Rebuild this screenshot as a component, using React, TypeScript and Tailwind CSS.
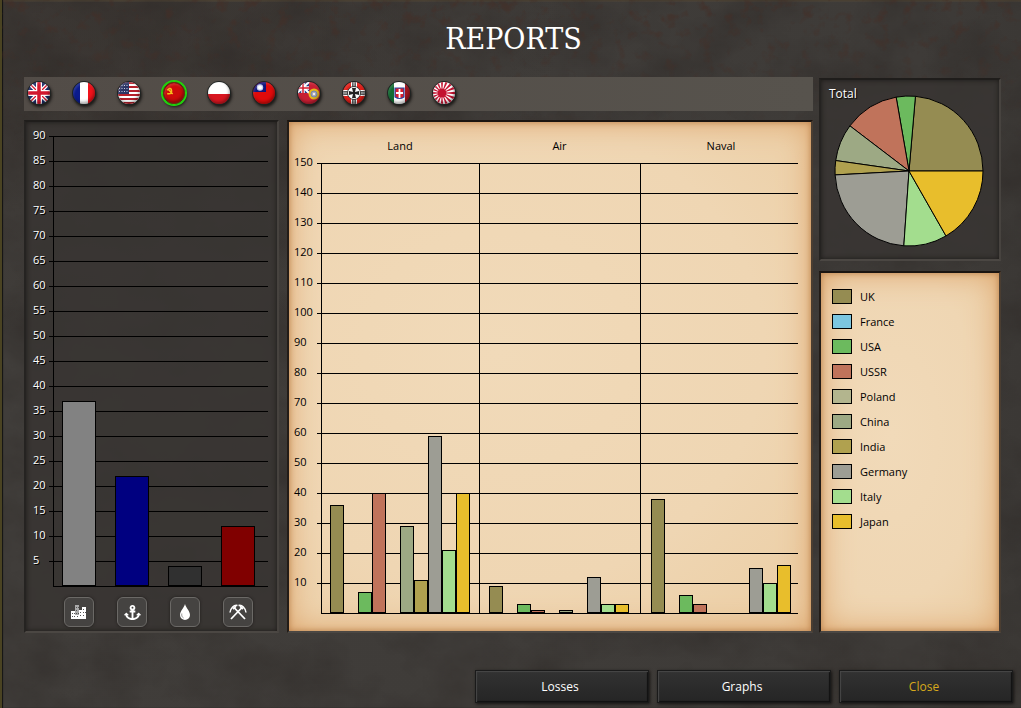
import type { ReactNode } from "react";
import { FaAnchor } from "react-icons/fa";

type Country = {
  name: string;
  color: string;
  land: number;
  air: number;
  naval: number;
  share: number; // degrees of the total pie
};

const COUNTRIES: Country[] = [
  { name: "UK", color: "#958c52", land: 36, air: 9, naval: 38, share: 85 },
  { name: "France", color: "#7cc6e0", land: 0, air: 0, naval: 0, share: 0 },
  { name: "USA", color: "#6cba5e", land: 7, air: 3, naval: 6, share: 15 },
  { name: "USSR", color: "#c0735b", land: 40, air: 1, naval: 3, share: 43 },
  { name: "Poland", color: "#b3b58e", land: 0, air: 0, naval: 0, share: 0 },
  { name: "China", color: "#9da984", land: 29, air: 1, naval: 0, share: 29 },
  { name: "India", color: "#b0a14f", land: 11, air: 0, naval: 0, share: 11 },
  { name: "Germany", color: "#9d9d94", land: 59, air: 12, naval: 15, share: 83 },
  { name: "Italy", color: "#a3dd8e", land: 21, air: 3, naval: 10, share: 34 },
  { name: "Japan", color: "#e8be2c", land: 40, air: 3, naval: 16, share: 60 },
];

const RESOURCES = [
  { name: "Industry", value: 37, color: "#828282", icon: <CityIcon /> },
  { name: "Ports", value: 22, color: "#000080", icon: <FaAnchor size={17} /> },
  { name: "Oil", value: 4, color: "#303030", icon: <OilIcon /> },
  { name: "Minerals", value: 12, color: "#800000", icon: <MiningIcon /> },
];

const RESOURCE_TICKS = Array.from({ length: 18 }, (_, i) => 90 - i * 5);
const FORCE_TICKS = Array.from({ length: 15 }, (_, i) => 150 - i * 10);

export default function App() {
  return (
    <div className="relative isolate flex min-h-screen flex-col border-l-2 border-[#4a4322] bg-[#3b3835] font-['Open_Sans','Noto_Sans',sans-serif] text-[11px] text-white">
      <Backdrop />

      <header className="flex h-[77px] items-center justify-center pl-1">
        <h1 className="font-['DejaVu_Serif_Condensed','Liberation_Serif',serif] text-[30px] leading-9">REPORTS</h1>
      </header>

      <main className="flex gap-[6px] pr-5 pl-[22px]">
        <div className="flex min-w-0 flex-1 flex-col gap-[9px]">
          <FlagBar />
          <div className="grid flex-1 grid-cols-[255fr_526fr] gap-2">
            <ResourceChart />
            <ForceChart />
          </div>
        </div>

        <aside className="flex w-[182px] shrink-0 flex-col gap-[10px] pt-px">
          <section className={"relative flex h-[183px] items-center justify-center pt-0.5 pr-0.5 " + DARK_PANEL}>
            <h2 className="absolute top-1 left-2 text-[12px] leading-5 [text-shadow:1px_1px_1px_#000]">Total</h2>
            <TotalPie />
          </section>
          <section className={"flex-1 pt-[11px] pl-[11px] " + PAPER_PANEL}>
            <ul>
              {COUNTRIES.map((c) => (
                <li key={c.name} className="flex h-[25px] items-center gap-2">
                  <span className="h-[15px] w-5 border border-black" style={{ backgroundColor: c.color }} />
                  <span className="pt-0.5">{c.name}</span>
                </li>
              ))}
            </ul>
          </section>
        </aside>
      </main>

      <footer className="mt-auto flex justify-end gap-2 pt-[37px] pr-2 pb-[5px]">
        <FooterButton>Losses</FooterButton>
        <FooterButton>Graphs</FooterButton>
        <FooterButton accent>Close</FooterButton>
      </footer>
    </div>
  );
}

// ============= Panels ============= //
const DARK_PANEL =
  "border-2 border-t-[#1f1d1b] border-r-[#47433f] border-b-[#4b4743] border-l-[#252321] bg-[#383532]/85 shadow-[inset_0_0_5px_#1c1a18]";

const PAPER_PANEL =
  "border-2 border-t-[#1b1511] border-r-[#4a3d31] border-b-[#4b4743] border-l-[#231c17] bg-[#efd7b5] bg-[radial-gradient(ellipse_at_40%_45%,#f1dab9_0%,#efd6b3_60%,#ebcda3_100%)] text-black shadow-[inset_0_0_6px_#b9804b,inset_0_0_30px_#dda46c]";

function Backdrop() {
  return (
    <div
      aria-hidden="true"
      className="absolute inset-0 -z-10 overflow-hidden bg-[linear-gradient(#504638_0,#504638_1px,transparent_2px),radial-gradient(ellipse_at_12%_0%,#352f2b99,transparent_35%),linear-gradient(90deg,#403d3a,#3e3b38_90%,#3b3835)] shadow-[inset_1px_0_1px_#111]"
    >
      <svg className="h-full w-full" colorInterpolationFilters="sRGB">
        <filter id="grime">
          <feTurbulence type="fractalNoise" baseFrequency="0.015 0.02" numOctaves="5" seed="3" />
          <feColorMatrix values="0 0 0 0 0.16  0 0 0 0 0.14  0 0 0 0 0.13  1.2 0 0 0 -0.45" />
        </filter>
        <filter id="rust">
          <feTurbulence type="fractalNoise" baseFrequency="0.08" numOctaves="4" seed="8" />
          <feColorMatrix values="0 0 0 0 0.27  0 0 0 0 0.18  0 0 0 0 0.15  4 0 0 0 -2.2" />
        </filter>
        <linearGradient id="fade" x1="0" y1="0" x2="0" y2="1">
          <stop offset="0" stopColor="#fff" />
          <stop offset="0.2" stopColor="#000" />
        </linearGradient>
        <mask id="top">
          <rect width="100%" height="100%" fill="url(#fade)" />
        </mask>
        <rect width="100%" height="100%" filter="url(#grime)" opacity="0.6" />
        <g mask="url(#top)" opacity="0.6">
          <rect width="100%" height="100%" filter="url(#rust)" />
        </g>
      </svg>
    </div>
  );
}

function FooterButton({ children, accent = false }: { children: ReactNode; accent?: boolean }) {
  return (
    <button
      type="button"
      className={
        "h-[33px] w-[174px] border border-[#1a1a1a] bg-linear-to-b from-[#323232] to-[#252525] pr-1 text-[12px] shadow-[inset_1px_1px_1px_#484848,inset_-1px_-1px_1px_#111,1px_1px_3px_#161412] " +
        (accent ? "text-[#d7a91c]" : "text-white")
      }
    >
      {children}
    </button>
  );
}

// ============= Charts ============= //
function ResourceChart() {
  return (
    <section aria-label="Resources" className={"min-w-0 pr-[9px] pb-1 pl-[7px] " + DARK_PANEL}>
      <div className="flex">
        <ul className="w-4 shrink-0 [text-shadow:1px_1px_0_#000]">
          {RESOURCE_TICKS.map((t) => (
            <li key={t} className="h-[25px] leading-[25px]">{t}</li>
          ))}
        </ul>
        <div className="relative mt-[14px] flex-1 pb-px">
          {RESOURCE_TICKS.map((t) => (
            <div key={t} className="h-[25px] border-t border-black" />
          ))}
          <div className="absolute inset-y-0 right-0 left-1 flex items-end gap-[19px] border-b border-l border-black pl-2">
            {RESOURCES.map((r) => (
              <div
                key={r.name}
                className="w-[34px] border border-black"
                style={{ height: r.value * 5, backgroundColor: r.color }}
              />
            ))}
          </div>
        </div>
      </div>
      <ul className="mt-[10px] flex gap-[23px] pl-[31px]">
        {RESOURCES.map((r) => (
          <li
            key={r.name}
            aria-label={r.name}
            className="grid size-[30px] place-items-center rounded-md border border-[#6b6966] bg-[#454341] shadow-[0_0_3px_#1f1d1b]"
          >
            {r.icon}
          </li>
        ))}
      </ul>
    </section>
  );
}

function ForceChart() {
  return (
    <section aria-label="Forces" className={"flex min-w-0 pr-[13px] pl-[5px] " + PAPER_PANEL}>
      <ul className="w-[23px] shrink-0 pt-[25px]">
        {FORCE_TICKS.map((t) => (
          <li key={t} className="h-[30px] leading-[30px]">{t}</li>
        ))}
      </ul>
      <div className="min-w-0 flex-1">
        <div className="-mr-1 ml-1 grid h-[41px] grid-cols-[158fr_161fr_162fr] pt-[14px] text-center leading-5">
          <h2>Land</h2>
          <h2>Air</h2>
          <h2>Naval</h2>
        </div>
        <div className="relative pb-px">
          {FORCE_TICKS.map((t) => (
            <div key={t} className="h-[30px] border-t border-black" />
          ))}
          <div className="absolute right-0 bottom-0 left-1 border-b border-black" />
          <div className="absolute inset-y-0 -right-1 left-1 grid grid-cols-[158fr_161fr_162fr] pb-px">
            <ForceBars kind="land" />
            <ForceBars kind="air" />
            <ForceBars kind="naval" />
          </div>
        </div>
      </div>
    </section>
  );
}

function ForceBars({ kind }: { kind: "land" | "air" | "naval" }) {
  return (
    <div className="flex items-end justify-center border-l border-black pr-0.5">
      {COUNTRIES.map((c) => (
        <div key={c.name} className="w-[14px]">
          {c[kind] > 0 && (
            <div className="border border-black" style={{ height: c[kind] * 3, backgroundColor: c.color }} />
          )}
        </div>
      ))}
    </div>
  );
}

function TotalPie() {
  const point = (deg: number) => {
    const a = (deg * Math.PI) / 180;
    return `${74 + 74 * Math.cos(a)} ${77 - 75 * Math.sin(a)}`;
  };
  let start = 0;
  return (
    <svg width="150" height="153" viewBox="-1 0 150 153" role="img" aria-label="Total forces by country">
      {COUNTRIES.filter((c) => c.share > 0).map((c) => {
        const from = start;
        start += c.share;
        return (
          <path
            key={c.name}
            d={`M74 77 L${point(from)} A74 75 0 0 0 ${point(start)} Z`}
            fill={c.color}
            stroke="#000"
            strokeWidth="1"
            strokeLinejoin="round"
          />
        );
      })}
    </svg>
  );
}

// ============= Resource icons ============= //
function CityIcon() {
  return (
    <svg width="16" height="14" viewBox="0 0 16 14" fill="#fff">
      <path d="M4 0h4v14H4z" fill="#aaa" />
      <path d="M0 6h4v8H0zM8 5h3v9H8zM11 2h4v12h-4zM4 10h4v4H4z" />
      <path d="M1 8h1v1H1zM3 8h1v1H3zM1 11h1v1H1zM3 11h1v1H3zM6 11h1v1H6zM9 7h1v1H9zM9 10h1v1H9zM12 4h1v1h-1zM12 7h1v1h-1zM12 10h1v1h-1zM14 7h1v1h-1zM5 2h1v1H5zM7 2h1v1H7zM5 5h1v1H5zM5 8h1v1H5zM7 8h1v1H7z" fill="#555" />
    </svg>
  );
}

function OilIcon() {
  return (
    <svg width="12" height="16" viewBox="0 0 12 16">
      <path d="M6 0C7 4 11 7 11 11a5 5 0 0 1-10 0C1 7 5 4 6 0Z" fill="#fff" />
      <path d="M2.8 9.5c-.4 2 .2 3.7 1.8 4.5" fill="none" stroke="#999" />
    </svg>
  );
}

function MiningIcon() {
  return (
    <svg width="18" height="16" viewBox="0 0 18 16" fill="none" stroke="#fff">
      <path d="M2 15 13 3.5M16 15 5 3.5" strokeWidth="1.8" />
      <path d="M8.5 1.5C5 .5 1.5 4 1 8.5M9.5 1.5C13 .5 16.5 4 17 8.5" strokeWidth="1.5" />
      <path d="m4 5 3-3M14 5l-3-3" strokeWidth="1.8" />
    </svg>
  );
}

// ============= Flags ============= //
const FLAGS: { name: string; art: ReactNode }[] = [
  { name: "UK", art: <UnionJack /> },
  {
    name: "France",
    art: (
      <>
        <path d="M0 0h8v24H0z" fill="#0b1b8c" />
        <path d="M8 0h8v24H8z" fill="#fff" />
        <path d="M16 0h8v24h-8z" fill="#f0121a" />
      </>
    ),
  },
  {
    name: "USA",
    art: (
      <>
        <path d="M0 0h24v24H0z" fill="#fff" />
        <path d="M0 2h24M0 6h24M0 10h24M0 14h24M0 18h24M0 22h24" stroke="#b5202b" strokeWidth="2" />
        <path d="M0 0h12v13H0z" fill="#2b3565" />
        <path d="M2 4.5h10M2 7.5h10M2 10.5h10" stroke="#c9cde0" strokeDasharray="1 1.5" />
      </>
    ),
  },
  {
    name: "USSR",
    art: (
      <>
        <path d="M0 0h24v24H0z" fill="#cc0a0a" />
        <path d="M5.5 7.5 10.5 13M4.5 12.5c4 1.5 6.5-2 3.5-6M4.5 9l3-2.5" fill="none" stroke="#f7bd1e" strokeWidth="1.6" />
      </>
    ),
  },
  {
    name: "Poland",
    art: (
      <>
        <path d="M0 0h24v13H0z" fill="#fff" />
        <path d="M0 13h24v11H0z" fill="#d81620" />
      </>
    ),
  },
  {
    name: "China",
    art: (
      <>
        <path d="M0 0h24v24H0z" fill="#e00b0b" />
        <path d="M0 0h14v11H0z" fill="#10147c" />
        <circle cx="8" cy="6.5" r="3.2" fill="#c4cdec" />
        <circle cx="8" cy="6.5" r="2" fill="#fff" />
      </>
    ),
  },
  {
    name: "India",
    art: (
      <>
        <path d="M0 0h24v24H0z" fill="#c81e32" />
        <path d="M0 0h12v12H0z" fill="#263c86" />
        <path d="m0 0 12 12M0 12 12 1" stroke="#fff" strokeWidth="2" />
        <path d="M6 0v12M0 7h12" stroke="#fff" strokeWidth="3.5" />
        <path d="M6 0v12M0 7h12" stroke="#d31b2e" strokeWidth="1.5" />
        <circle cx="17" cy="13" r="5.5" fill="#e5b81c" />
        <circle cx="17" cy="13" r="3" fill="#a9a6b0" stroke="#6f86b5" />
        <circle cx="17" cy="13" r="1.2" fill="#eee" />
      </>
    ),
  },
  {
    name: "Germany",
    art: (
      <>
        <path d="M0 0h24v24H0z" fill="#e21e18" />
        <path d="M12 0v24M0 12h24" stroke="#fff" strokeWidth="6" />
        <path d="M12 0v24M0 12h24" stroke="#222" strokeWidth="3.5" />
        <path d="M12 0v24M0 12h24" stroke="#fff" strokeWidth="1" />
        <circle cx="12" cy="12" r="6.5" fill="#fff" stroke="#333" />
        <path d="M10 7h4l-1 4 4-1v4l-4-1 1 4h-4l1-4-4 1v-4l4 1z" fill="#222" />
      </>
    ),
  },
  {
    name: "Italy",
    art: (
      <>
        <path d="M0 0h8v24H0z" fill="#126b32" />
        <path d="M7 0h11v24H7z" fill="#fff" />
        <path d="M18 0h6v24h-6z" fill="#a31621" />
        <path d="M8 7h9v9q-4.5 3-9 0z" fill="#d81e2c" stroke="#2748a8" strokeWidth="1.2" />
        <path d="M12.5 8v9M9 12h7" stroke="#fff" strokeWidth="1.8" />
      </>
    ),
  },
  { name: "Japan", art: <RisingSun /> },
];

function UnionJack() {
  return (
    <>
      <path d="M0 0h24v24H0z" fill="#1b2c6b" />
      <path d="m0 0 24 24M24 0 0 24" stroke="#fff" strokeWidth="4" />
      <path d="m0 0 24 24M24 0 0 24" stroke="#d2162d" strokeWidth="1.3" />
      <path d="M12 0v24M0 12h24" stroke="#fff" strokeWidth="6" />
      <path d="M12 0v24M0 12h24" stroke="#d2162d" strokeWidth="3.5" />
    </>
  );
}

function RisingSun() {
  return (
    <>
      <path d="M0 0h24v24H0z" fill="#fff" />
      {Array.from({ length: 16 }, (_, i) => (
        <path key={i} d="M10 12 25 10.5v3z" fill="#c41230" transform={`rotate(${i * 22.5} 10 12)`} />
      ))}
      <circle cx="10" cy="12" r="4.5" fill="#c41230" />
    </>
  );
}

function FlagBar() {
  return (
    <nav
      aria-label="Countries"
      className="flex h-[34px] items-center gap-[21px] bg-linear-to-r from-[#524c47] to-[#57534d] pb-[3px] pl-[3px]"
    >
      {FLAGS.map((f) => (
        <button
          key={f.name}
          type="button"
          aria-label={f.name}
          aria-pressed={f.name === "USSR"}
          className="group size-6 rounded-full border border-[#1f2423] bg-[#1f2423] shadow-[1px_2px_3px_#1b1917] aria-pressed:border-[#22d80c] aria-pressed:ring-1 aria-pressed:ring-[#22d80c]"
        >
          <span className="relative block size-full overflow-hidden rounded-full group-aria-pressed:border group-aria-pressed:border-[#7a2a0c]">
            <svg viewBox="1 1 22 22" className="size-full">{f.art}</svg>
            <span className="absolute inset-0 rounded-full shadow-[inset_-1px_-2px_3px_#0005,inset_1px_2px_2px_#fff2]" />
          </span>
        </button>
      ))}
    </nav>
  );
}
